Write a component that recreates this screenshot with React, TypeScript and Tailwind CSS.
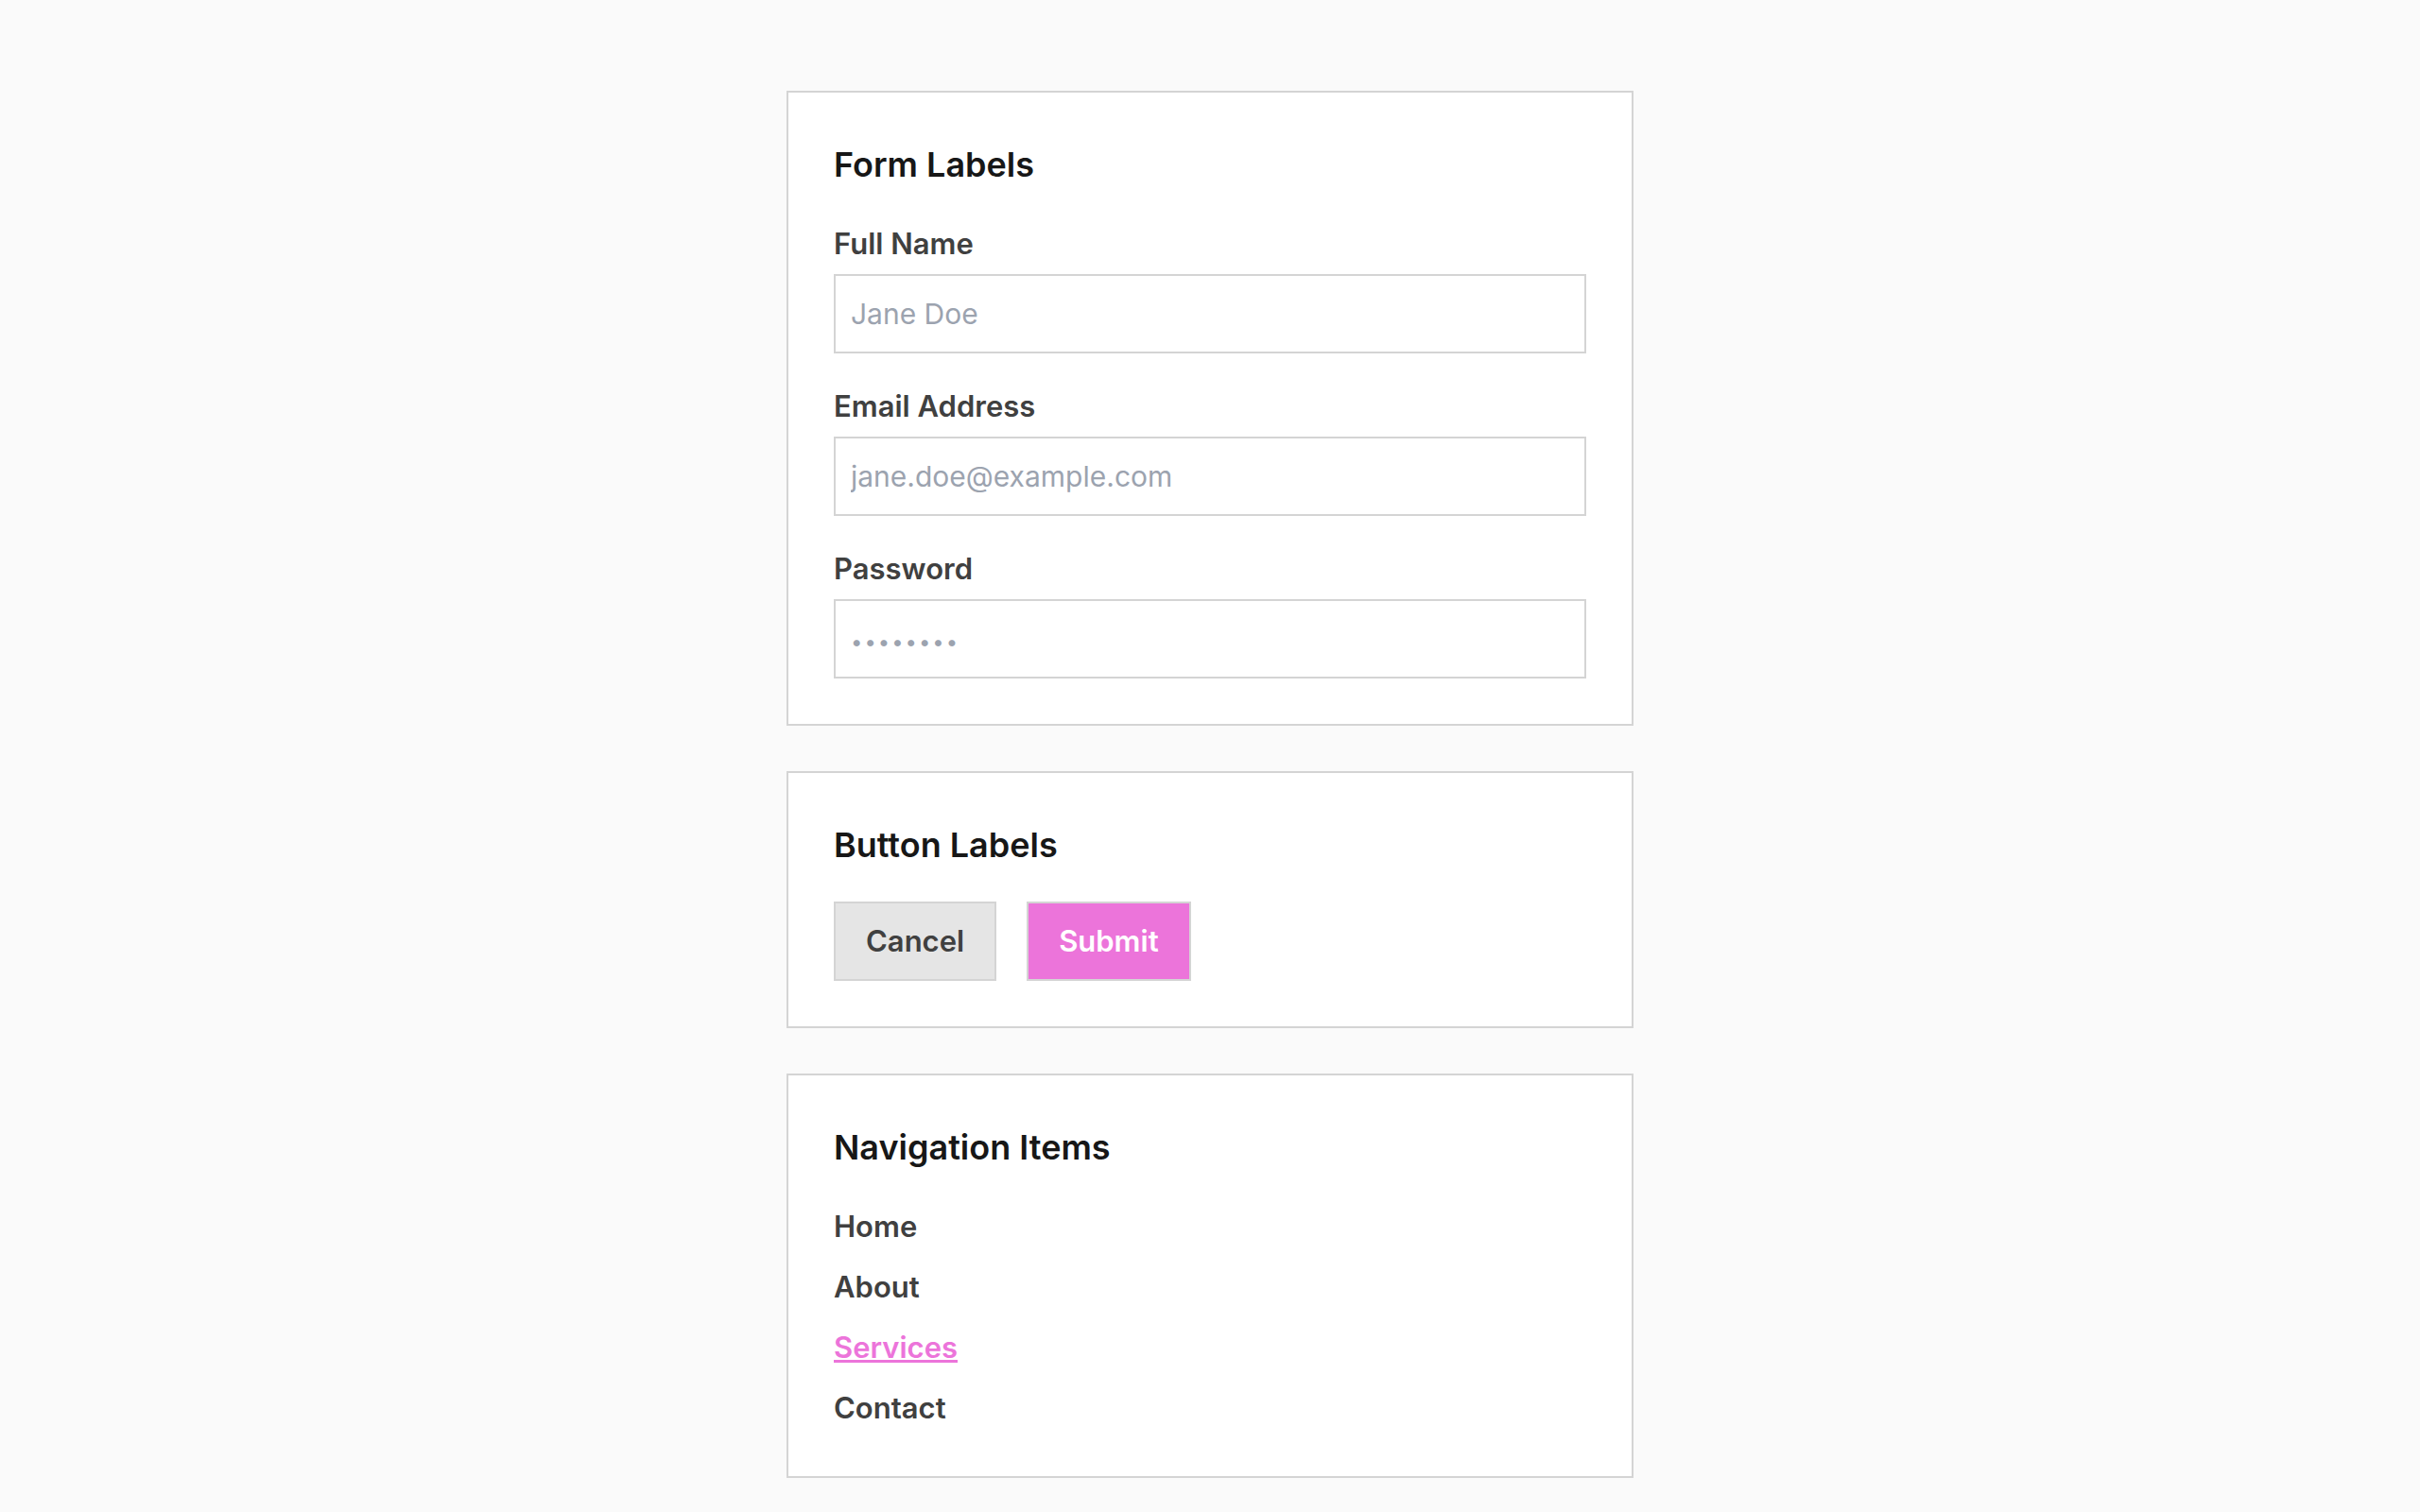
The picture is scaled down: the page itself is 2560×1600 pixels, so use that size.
const fields = [
  { label: 'Full Name', type: 'text', placeholder: 'Jane Doe', dots: false },
  { label: 'Email Address', type: 'email', placeholder: 'jane.doe@example.com', dots: false },
  { label: 'Password', type: 'password', placeholder: '••••••••', dots: true },
];

const navItems = [
  { label: 'Home', active: false },
  { label: 'About', active: false },
  { label: 'Services', active: true },
  { label: 'Contact', active: false },
];

function Card({ title, children }: { title: string; children: React.ReactNode }) {
  return (
    <section className="w-[896px] bg-white border-2 border-[#d4d4d4] p-[48px]">
      <h2 className="text-[36px] leading-[56px] font-semibold text-[#171717] mb-[32px]">{title}</h2>
      {children}
    </section>
  );
}

export default function App() {
  return (
    <div
      className="min-h-screen bg-[#fafafa] flex flex-col items-center gap-[48px] py-[96px]"
      style={{ fontFamily: 'Inter, "Noto Sans", sans-serif' }}
    >
      <Card title="Form Labels">
        <div className="flex flex-col gap-[32px]">
          {fields.map((f) => (
            <div key={f.label}>
              <label className="block text-[31px] leading-[48px] font-semibold text-[#404040] mb-[8px]">
                {f.label}
              </label>
              <input
                type={f.type}
                placeholder={f.placeholder}
                className={
                  f.dots
                    ? 'block w-full h-[84px] border-2 border-[#d4d4d4] bg-white px-[16px] text-[30px] leading-[48px] text-[#171717] placeholder:text-[#9ca3af] placeholder:text-[22px] placeholder:tracking-[2px] outline-none'
                    : 'block w-full h-[84px] border-2 border-[#d4d4d4] bg-white px-[16px] text-[30px] leading-[48px] text-[#171717] placeholder:text-[#9ca3af] outline-none'
                }
              />
            </div>
          ))}
        </div>
      </Card>

      <Card title="Button Labels">
        <div className="flex gap-[32px]">
          <button className="h-[84px] px-[32px] bg-[#e5e5e5] border-2 border-[#d4d4d4] text-[31px] leading-[48px] font-semibold text-[#404040]">
            Cancel
          </button>
          <button className="h-[84px] px-[32px] bg-[#ec74da] border-2 border-[#d4d4d4] text-[31px] leading-[48px] font-semibold text-white">
            Submit
          </button>
        </div>
      </Card>

      <Card title="Navigation Items">
        <nav className="flex flex-col gap-[16px]">
          {navItems.map((n) => (
            <a
              key={n.label}
              href="#"
              className={
                n.active
                  ? 'block text-[31px] leading-[48px] font-semibold text-[#ec74da] underline'
                  : 'block text-[31px] leading-[48px] font-semibold text-[#404040]'
              }
            >
              {n.label}
            </a>
          ))}
        </nav>
      </Card>
    </div>
  );
}
